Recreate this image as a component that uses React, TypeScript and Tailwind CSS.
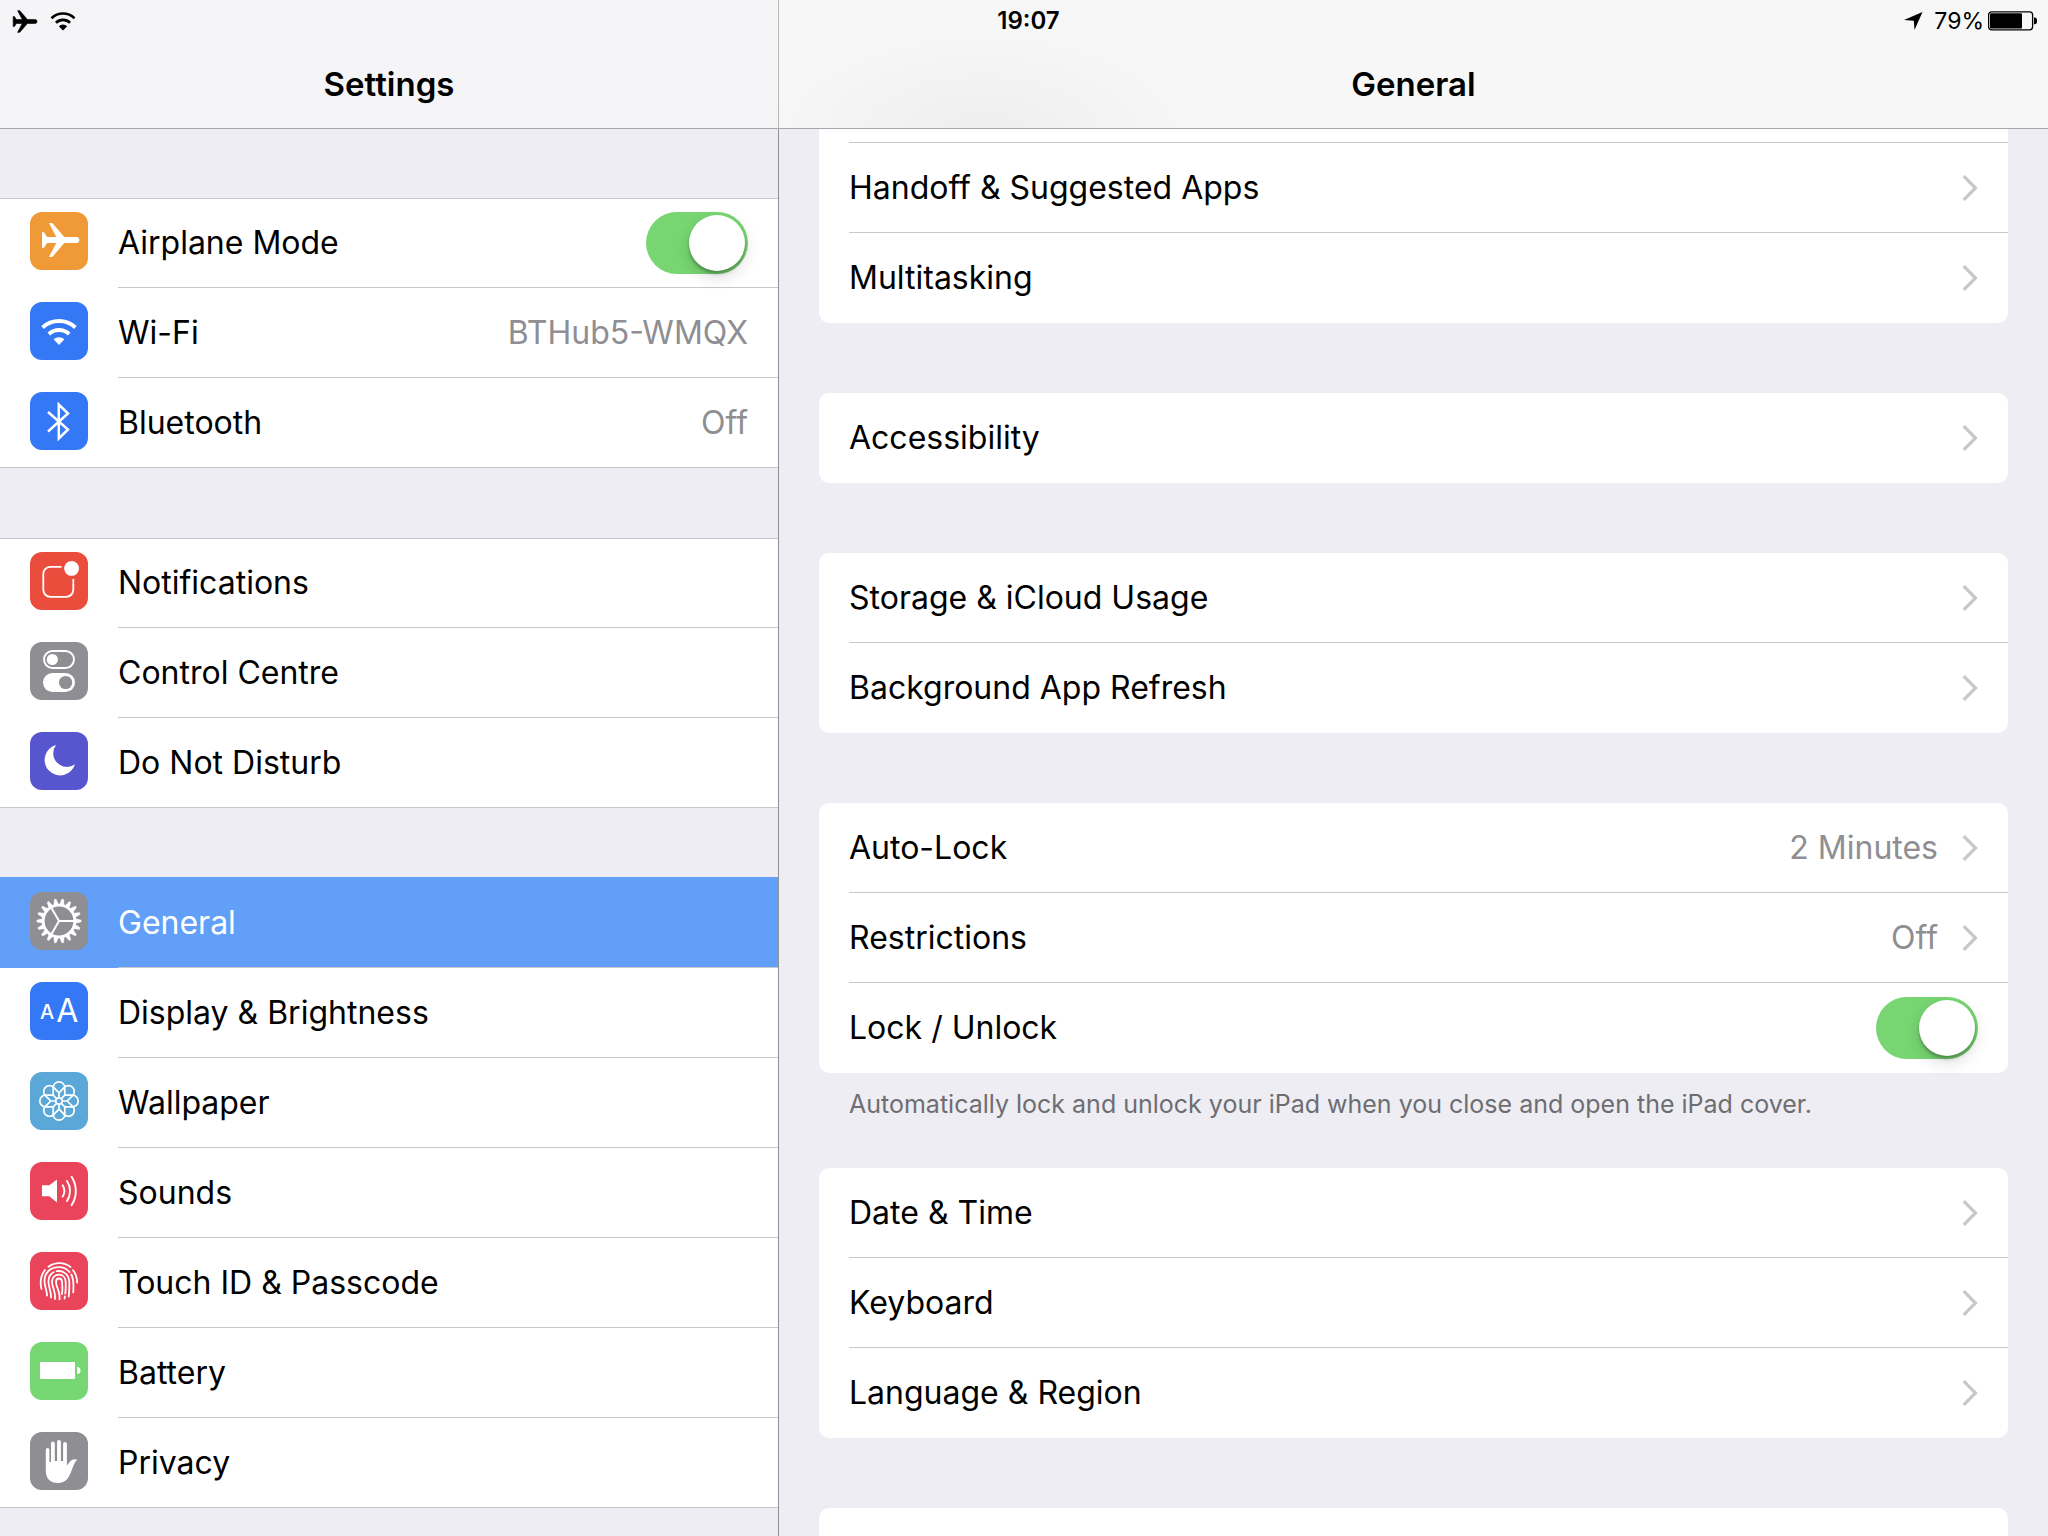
import { useState } from 'react'
import type { ReactNode } from 'react'

const GEAR_TEETH = Array.from({ length: 18 }, (_, i) => i * 20)
const GEAR_SPOKES = [0, 120, 240]
const PETALS = Array.from({ length: 8 }, (_, i) => i * 45)

const PLANE_PATH =
  'M12 20.3h2l3 4.7h9.3L19 11h3.3L34.3 25h12a3 3 0 0 1 0 6h-12L22.3 45H19l7.3-14H17l-3 4.7h-2z'

function PlaneIcon() {
  return <path fill="#fff" d={PLANE_PATH} />
}

function WifiIcon() {
  return (
    <>
      <path d="M12.6 25.5a24 24 0 0 1 32.8 0M18.8 32a15 15 0 0 1 20.4 0" fill="none" stroke="#fff" strokeWidth="3.8" />
      <path d="M29 43l-5.4-5.7a7.9 7.9 0 0 1 10.8 0z" fill="#fff" />
    </>
  )
}

function BluetoothIcon() {
  return (
    <path
      d="M18 20l20 17.5-9.2 9V12.5l9.2 9L18 39.5"
      fill="none"
      stroke="#fff"
      strokeWidth="2.5"
      strokeMiterlimit="10"
    />
  )
}

function NotificationsIcon() {
  return (
    <>
      <path
        d="M31.5 14.8H20.3a7 7 0 0 0-7 7v16a7 7 0 0 0 7 7h16a7 7 0 0 0 7-7V27"
        fill="none"
        stroke="#fff"
        strokeWidth="1.8"
      />
      <circle cx="41.6" cy="16.4" r="7.4" fill="#fff" />
    </>
  )
}

function ControlIcon() {
  return (
    <>
      <rect x="14" y="9" width="30" height="17" rx="8.5" fill="none" stroke="#fff" strokeWidth="1.9" />
      <circle cx="22.3" cy="17.5" r="5.6" fill="#fff" />
      <rect x="13" y="31" width="32" height="19" rx="9.5" fill="#fff" />
      <circle cx="35.6" cy="40.5" r="6.6" fill="#8e8e93" />
    </>
  )
}

function MoonIcon() {
  return <path d="M26 13A15.5 15.5 0 1 0 45 32.3 13.7 13.7 0 0 1 26 13z" fill="#fff" />
}

function GearIcon() {
  return (
    <g stroke="#fff" fill="none">
      <circle cx="29" cy="29" r="15.8" strokeWidth="2.8" />
      {GEAR_TEETH.map((deg) => (
        <path key={deg} d="M45.5 26.8l5.6 1.3v1.8l-5.6 1.3z" fill="#fff" strokeWidth="0.4" transform={`rotate(${deg} 29 29)`} />
      ))}
      {GEAR_SPOKES.map((deg) => (
        <path key={deg} d="M29 29h15" strokeWidth="2" transform={`rotate(${deg} 29 29)`} />
      ))}
    </g>
  )
}

function DisplayIcon() {
  return (
    <g fill="#fff" fontFamily="Inter, sans-serif">
      <text x="10" y="37.3" fontSize="20" fontWeight="500">A</text>
      <text x="26.2" y="40.3" fontSize="32">A</text>
    </g>
  )
}

function WallpaperIcon() {
  return (
    <g stroke="#fff" fill="none" strokeWidth="1.7">
      <circle cx="29" cy="29" r="3.2" />
      {PETALS.map((deg) => (
        <path
          key={deg}
          d="M23.2 23.2V15.6a5.8 5.8 0 0 1 11.6 0v7.6M29 20.8v5"
          transform={`rotate(${deg} 29 29)`}
        />
      ))}
    </g>
  )
}

function SoundsIcon() {
  return (
    <>
      <path d="M12 23.3h7.3l7.7-5.8v23l-7.7-6.2H12z" fill="#fff" />
      <path
        d="M32.7 23.2a11 11 0 0 1 0 11.4M37 19a18 18 0 0 1 0 20M41.6 14.8a26 26 0 0 1 0 28.4"
        fill="none"
        stroke="#fff"
        strokeWidth="1.9"
        strokeLinecap="round"
      />
    </>
  )
}

function TouchIcon() {
  return (
    <g fill="none" stroke="#fff" strokeWidth="1.8" strokeLinecap="round">
      <path d="M11.5 37C10 31 10.3 24 15 18M18.5 14.8c6.5-4.8 15.5-4.8 22 .2M43 18.3c3 3.7 4 7.7 4.2 12.2" />
      <path d="M17 43.5c0-6-2.5-8-2.5-14.5 0-9 6.5-13.8 14.5-13.8 4.5 0 8 1.8 10.5 4.8M41.3 22.5c2.7 5 2.4 12 1.9 18" />
      <path d="M21 45.5c.5-7-2.5-9-2.5-16 0-4.5 2-7.5 5-9.2M26.5 19.2c7-1.2 12.5 3.3 12.8 10.8.2 6-.1 10-.6 14.5" />
      <path d="M25 47c1-8-3-11-3-17.5 0-4 3-6.8 7-6.8s6.5 3.3 6.7 7.3c.2 5 .1 8-.4 11.5M34.8 44.5l-.2 2" />
      <path d="M29.5 47.3c1-8-3.5-12-3.5-17.3 0-2 1-3.5 3-3.5s3 1.5 3 3.5c.6 6 .4 10-.2 12" />
    </g>
  )
}

function BatteryIcon() {
  return (
    <>
      <rect x="10" y="20" width="35" height="17" rx="1" fill="#fff" />
      <path d="M47 25a3.5 3.5 0 0 1 0 7z" fill="#fff" />
    </>
  )
}

function HandIcon() {
  return (
    <path
      d="M15.8 17.8a1.8 1.8 0 0 1 3.6 0V30H21V11.5a1.9 1.9 0 0 1 3.8 0V29h2.3V10a1.9 1.9 0 0 1 3.8 0v19h2.2V12a1.9 1.9 0 0 1 3.8 0v21.5l3-3.8c1.8-2.4 4.5-3.3 7.4-1.9-3 2.2-4 6.5-6 11.5-2.6 7-5.5 11.7-13.3 11.7-7.5 0-12.2-4-12.2-12z"
      fill="#fff"
    />
  )
}

type SidebarItem = {
  label: string
  icon: ReactNode
  color: string
  value?: string
  toggle?: boolean
  selected?: boolean
}

const sidebarGroups: SidebarItem[][] = [
  [
    { label: 'Airplane Mode', icon: <PlaneIcon />, color: 'bg-[#f09a37]', toggle: true },
    { label: 'Wi-Fi', icon: <WifiIcon />, color: 'bg-[#3478f6]', value: 'BTHub5-WMQX' },
    { label: 'Bluetooth', icon: <BluetoothIcon />, color: 'bg-[#3478f6]', value: 'Off' },
  ],
  [
    { label: 'Notifications', icon: <NotificationsIcon />, color: 'bg-[#eb4d3d]' },
    { label: 'Control Centre', icon: <ControlIcon />, color: 'bg-[#8e8e93]' },
    { label: 'Do Not Disturb', icon: <MoonIcon />, color: 'bg-[#5756ce]' },
  ],
  [
    { label: 'General', icon: <GearIcon />, color: 'bg-[#8e8e93]', selected: true },
    { label: 'Display & Brightness', icon: <DisplayIcon />, color: 'bg-[#3478f6]' },
    { label: 'Wallpaper', icon: <WallpaperIcon />, color: 'bg-[#5aa7d8]' },
    { label: 'Sounds', icon: <SoundsIcon />, color: 'bg-[#ea445a]' },
    { label: 'Touch ID & Passcode', icon: <TouchIcon />, color: 'bg-[#ea445a]' },
    { label: 'Battery', icon: <BatteryIcon />, color: 'bg-[#77d873]' },
    { label: 'Privacy', icon: <HandIcon />, color: 'bg-[#8e8e93]' },
  ],
]

type DetailItem = { label: string; value?: string; toggle?: boolean }

const detailGroups: { items: DetailItem[]; footer?: string }[] = [
  { items: [{ label: 'Accessibility' }] },
  { items: [{ label: 'Storage & iCloud Usage' }, { label: 'Background App Refresh' }] },
  {
    items: [
      { label: 'Auto-Lock', value: '2 Minutes' },
      { label: 'Restrictions', value: 'Off' },
      { label: 'Lock / Unlock', toggle: true },
    ],
    footer: 'Automatically lock and unlock your iPad when you close and open the iPad cover.',
  },
  { items: [{ label: 'Date & Time' }, { label: 'Keyboard' }, { label: 'Language & Region' }] },
]

function Toggle({ id }: { id: string }) {
  const [on, setOn] = useState(true)
  return (
    <input
      id={id}
      type="checkbox"
      role="switch"
      checked={on}
      onChange={() => setOn(!on)}
      className="flex h-[62px] w-[102px] shrink-0 cursor-pointer appearance-none rounded-full bg-[#e5e5ea] p-[3px] before:size-14 before:rounded-full before:bg-white before:shadow-[0_6px_16px_rgba(0,0,0,0.15),0_3px_3px_rgba(0,0,0,0.25)] checked:justify-end checked:bg-[#77d672]"
    />
  )
}

function Chevron() {
  return (
    <svg className="ml-6 h-[26px] w-4 shrink-0" viewBox="0 0 16 26" aria-hidden="true">
      <path d="M1.7 1.2L13.5 13 1.7 24.8" fill="none" stroke="#c7c7cc" strokeWidth="3.2" />
    </svg>
  )
}

function SidebarRow({ item, last }: { item: SidebarItem; last: boolean }) {
  const id = item.label.toLowerCase().replace(/\W+/g, '-')
  const body = (
    <>
      <svg className={`mb-1 size-[58px] shrink-0 rounded-xl ${item.color}`} viewBox="0 0 58 58" aria-hidden="true">
        {item.icon}
      </svg>
      <span
        className={`ml-[30px] flex h-full flex-1 items-center justify-between pr-[30px] ${
          last ? '' : 'border-b border-[#c8c7cc]'
        } ${item.selected ? 'text-white' : ''}`}
      >
        {item.toggle ? <label htmlFor={id}>{item.label}</label> : item.label}
        {item.value && <span className="text-[#8e8e93]">{item.value}</span>}
        {item.toggle && <Toggle id={id} />}
      </span>
    </>
  )
  const rowClass = `flex h-[90px] items-center pl-[30px] ${
    item.selected ? 'bg-[#619ff8] shadow-[0_-1px_0_#619ff8]' : ''
  }`

  return item.toggle ? (
    <div className={rowClass}>{body}</div>
  ) : (
    <a href={`#${id}`} aria-current={item.selected ? 'page' : undefined} className={rowClass}>
      {body}
    </a>
  )
}

function DetailRow({ item, last }: { item: DetailItem; last: boolean }) {
  const id = item.label.toLowerCase().replace(/\W+/g, '-')
  const rowClass = `ml-[30px] flex h-[90px] items-center pr-[30px] ${last ? '' : 'border-b border-[#c8c7cc]'}`

  if (item.toggle) {
    return (
      <div className={rowClass}>
        <label htmlFor={id} className="flex-1">{item.label}</label>
        <Toggle id={id} />
      </div>
    )
  }
  return (
    <a href={`#${id}`} className={rowClass}>
      <span className="flex-1">{item.label}</span>
      {item.value && <span className="text-[#8e8e93]">{item.value}</span>}
      <Chevron />
    </a>
  )
}

function StatusBar() {
  return (
    <div className="absolute inset-x-0 top-0 z-10 grid h-[42px] grid-cols-3 items-center pr-[11px] pl-3">
      <div className="flex items-center gap-3">
        <svg className="h-[23px] w-[26px]" viewBox="11 10 39 36" aria-label="Airplane mode">
          <path d={PLANE_PATH} stroke="#000" strokeWidth="1" />
        </svg>
        <svg className="h-[19px] w-[26px]" viewBox="0 0 26 19" aria-label="Wi-Fi">
          <path d="M1.5 6.2a16.5 16.5 0 0 1 23 0M5.9 10.8a10.2 10.2 0 0 1 14.2 0" fill="none" stroke="#000" strokeWidth="2.6" />
          <path d="M13 18.5l-4.2-4.2a6 6 0 0 1 8.4 0z" />
        </svg>
      </div>
      <time className="pl-2 text-center text-2xl font-semibold">19:07</time>
      <div className="flex items-center justify-end text-[23px]">
        <svg className="mr-[11px] h-[18px] w-[19px]" viewBox="0 0 19 18" aria-label="Location">
          <path d="M18.5 0L10.5 18 9.8 8.8 0 7.9z" />
        </svg>
        <span>79%</span>
        <svg className="ml-1 h-5 w-[49px]" viewBox="0 0 49 20" aria-label="Battery level">
          <rect x="0.6" y="0.8" width="44" height="18" rx="3" fill="none" stroke="#000" strokeWidth="1.3" />
          <rect x="2" y="2.2" width="32" height="15.2" rx="1" />
          <path d="M46 6.5h1a2.5 2.5 0 0 1 2 2.5v1.8a2.5 2.5 0 0 1-2 2.5h-1z" />
        </svg>
      </div>
    </div>
  )
}

export default function App() {
  return (
    <div className="relative flex h-screen overflow-hidden bg-[#eeedf3] font-[Inter,sans-serif] text-[32px] leading-10 text-black">
      <StatusBar />

      {/* Sidebar */}
      <aside className="flex w-[779px] shrink-0 flex-col">
        <header className="flex h-[129px] shrink-0 items-end justify-center border-r border-b border-r-[#b8b8bb] border-b-[#a7a7ab] bg-[#f5f5f7] pb-6">
          <h1 className="text-[33px] font-semibold">Settings</h1>
        </header>
        <nav className="flex flex-1 flex-col gap-[70px] border-r border-[#8f8f94] pt-[69px]">
          {sidebarGroups.map((group, i) => (
            <div
              key={i}
              className="bg-white shadow-[inset_0_1px_0_#c8c7cc,inset_0_-1px_0_#c8c7cc]"
            >
              {group.map((item, j) => (
                <SidebarRow key={item.label} item={item} last={j === group.length - 1} />
              ))}
            </div>
          ))}
        </nav>
      </aside>

      {/* General pane */}
      <main className="flex flex-1 flex-col">
        <header className="flex h-[129px] shrink-0 items-end justify-center border-b border-[#a7a7ab] bg-[#f7f7f7] bg-[radial-gradient(ellipse_220px_110px_at_16%_105%,#eeeeee,#f7f7f7)] pb-6">
          <h2 className="text-[33px] font-semibold">General</h2>
        </header>
        <div className="flex flex-1 flex-col px-10">
          <section className="rounded-b-[10px] bg-white">
            <div className="ml-[30px] h-[14px] border-b border-[#c8c7cc]" />
            <DetailRow item={{ label: 'Handoff & Suggested Apps' }} last={false} />
            <DetailRow item={{ label: 'Multitasking' }} last />
          </section>
          {detailGroups.map((group) => (
            <div key={group.items[0].label} className="pt-[70px]">
              <section className="rounded-[10px] bg-white">
                {group.items.map((item, j) => (
                  <DetailRow key={item.label} item={item} last={j === group.items.length - 1} />
                ))}
              </section>
              {group.footer && (
                <p className="-mb-[26px] px-[30px] pt-[11px] text-[25px] leading-10 text-[#6d6d72]">{group.footer}</p>
              )}
            </div>
          ))}
          <section className="mt-[70px] flex-1 rounded-t-[10px] bg-white" />
        </div>
      </main>
    </div>
  )
}
